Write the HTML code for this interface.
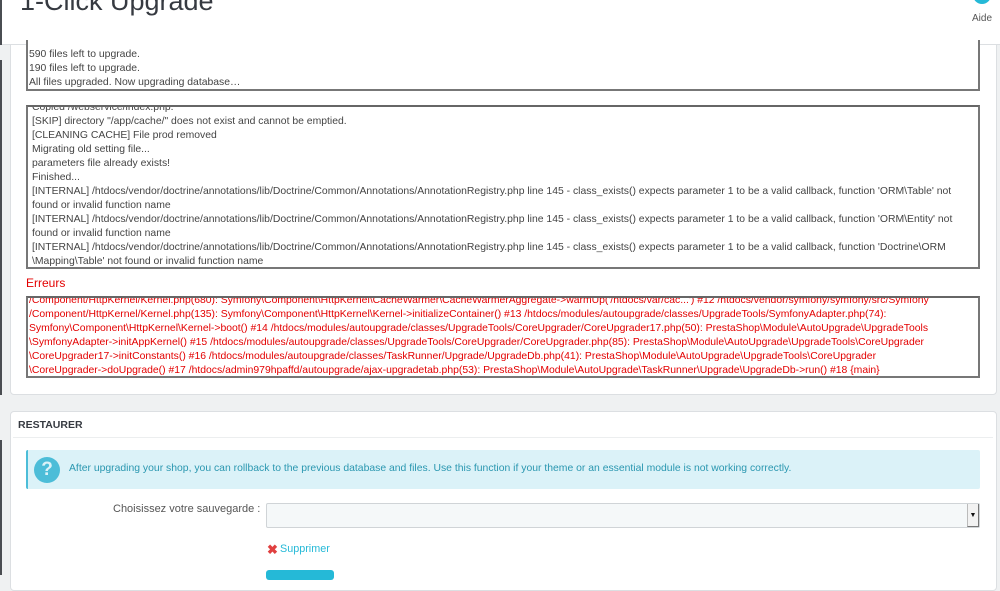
<!DOCTYPE html>
<html><head><meta charset="utf-8"><style>
*{margin:0;padding:0;box-sizing:border-box}
body{width:1000px;height:575px;overflow:hidden;background:#eff1f2;font-family:"Liberation Sans",sans-serif;position:relative;color:#555}
.abs{position:absolute}
.hdr{left:0;top:0;width:1000px;height:45px;background:#fff;border-bottom:1px solid #dcdfe2}
.title{left:20px;top:-14px;font-size:27px;color:#363a41;white-space:nowrap}
.aide{left:972px;top:13px;font-size:10px;color:#555}
.aidec{left:973px;top:-14px;width:18px;height:18px;border-radius:50%;background:#25b9d7}
.lstrip{left:0;width:2px;background:#4a4d52}
.panel{background:#fff;border:1px solid #dcdfe2;border-radius:4px}
.box{border:2px solid #777;border-top-color:#666;background:#fff;overflow:hidden;font-size:10.4px;line-height:14px;color:#444}
.box .in{position:absolute;white-space:nowrap}
.red{color:#e30000}
</style></head><body>
<div class="abs panel" style="left:10px;top:30px;width:987px;height:365px"></div>
<div class="abs hdr"></div>
<div class="abs title">1-Click Upgrade</div>
<div class="abs aidec"></div>
<div class="abs aide">Aide</div>
<div class="abs lstrip" style="top:0;height:45px"></div>
<div class="abs lstrip" style="top:60px;height:335px"></div>
<div class="abs lstrip" style="top:440px;height:135px"></div>

<div class="abs box" style="left:26px;top:40px;width:954px;height:51px;border-top:none">
<div class="in" style="left:1px;top:8px">590 files left to upgrade.<br>190 files left to upgrade.<br>All files upgraded. Now upgrading database…</div></div>

<div class="abs box" style="left:26px;top:105px;width:954px;height:164px">
<div class="in" style="left:4px;top:-6px">Copied /webservice/index.php.<br>[SKIP] directory "/app/cache/" does not exist and cannot be emptied.<br>[CLEANING CACHE] File prod removed<br>Migrating old setting file...<br>parameters file already exists!<br>Finished...<br>[INTERNAL] /htdocs/vendor/doctrine/annotations/lib/Doctrine/Common/Annotations/AnnotationRegistry.php line 145 - class_exists() expects parameter 1 to be a valid callback, function 'ORM\Table' not<br>found or invalid function name<br>[INTERNAL] /htdocs/vendor/doctrine/annotations/lib/Doctrine/Common/Annotations/AnnotationRegistry.php line 145 - class_exists() expects parameter 1 to be a valid callback, function 'ORM\Entity' not<br>found or invalid function name<br>[INTERNAL] /htdocs/vendor/doctrine/annotations/lib/Doctrine/Common/Annotations/AnnotationRegistry.php line 145 - class_exists() expects parameter 1 to be a valid callback, function 'Doctrine\ORM<br>\Mapping\Table' not found or invalid function name</div></div>

<div class="abs red" style="left:26px;top:276px;font-size:12px">Erreurs</div>
<div class="abs box red" style="left:26px;top:296px;width:954px;height:82px">
<div class="in red" style="left:1px;top:-4px">/Component/HttpKernel/Kernel.php(680): Symfony\Component\HttpKernel\CacheWarmer\CacheWarmerAggregate-&gt;warmUp('/htdocs/var/cac...') #12 /htdocs/vendor/symfony/symfony/src/Symfony<br>/Component/HttpKernel/Kernel.php(135): Symfony\Component\HttpKernel\Kernel-&gt;initializeContainer() #13 /htdocs/modules/autoupgrade/classes/UpgradeTools/SymfonyAdapter.php(74):<br>Symfony\Component\HttpKernel\Kernel-&gt;boot() #14 /htdocs/modules/autoupgrade/classes/UpgradeTools/CoreUpgrader/CoreUpgrader17.php(50): PrestaShop\Module\AutoUpgrade\UpgradeTools<br>\SymfonyAdapter-&gt;initAppKernel() #15 /htdocs/modules/autoupgrade/classes/UpgradeTools/CoreUpgrader/CoreUpgrader.php(85): PrestaShop\Module\AutoUpgrade\UpgradeTools\CoreUpgrader<br>\CoreUpgrader17-&gt;initConstants() #16 /htdocs/modules/autoupgrade/classes/TaskRunner/Upgrade/UpgradeDb.php(41): PrestaShop\Module\AutoUpgrade\UpgradeTools\CoreUpgrader<br>\CoreUpgrader-&gt;doUpgrade() #17 /htdocs/admin979hpaffd/autoupgrade/ajax-upgradetab.php(53): PrestaShop\Module\AutoUpgrade\TaskRunner\Upgrade\UpgradeDb-&gt;run() #18 {main}</div></div>

<div class="abs panel" style="left:10px;top:411px;width:987px;height:180px"></div>
<div class="abs" style="left:18px;top:419px;font-size:10.5px;font-weight:bold;color:#363a41">RESTAURER</div>
<div class="abs" style="left:13px;top:437px;width:980px;height:1px;background:#eceeef"></div>
<div class="abs" style="left:26px;top:450px;width:954px;height:39px;background:#dbf2f8;border-left:2px solid #4cbdd8;border-radius:2px"></div>
<div class="abs" style="left:34px;top:457px;width:26px;height:26px;border-radius:50%;background:#4cbdd8;color:#dbf2f8;font-weight:bold;font-size:19px;text-align:center;line-height:26px">?</div>
<div class="abs" style="left:69px;top:463px;font-size:10.4px;color:#2a97b0;white-space:nowrap">After upgrading your shop, you can rollback to the previous database and files. Use this function if your theme or an essential module is not working correctly.</div>
<div class="abs" style="left:113px;top:503px;font-size:11px;color:#555;white-space:nowrap">Choisissez votre sauvegarde :</div>
<div class="abs" style="left:266px;top:503px;width:714px;height:25px;background:#f5f8f9;border:1px solid #d0d4d7;border-radius:2px"></div>
<div class="abs" style="left:967px;top:504px;width:12px;height:23px;background:#f2f2f2;border-left:1px solid #bbb;border-right:1px solid #777;border-bottom:1px solid #777;font-size:7px;text-align:center;line-height:23px;color:#111">▼</div>
<div class="abs" style="left:267px;top:542px;font-size:13px;color:#e04040;font-weight:bold">✖</div>
<div class="abs" style="left:280px;top:543px;font-size:10.8px;color:#25b9d7">Supprimer</div>
<div class="abs" style="left:266px;top:570px;width:68px;height:10px;background:#25b9d7;border-radius:3px"></div>
</body></html>
